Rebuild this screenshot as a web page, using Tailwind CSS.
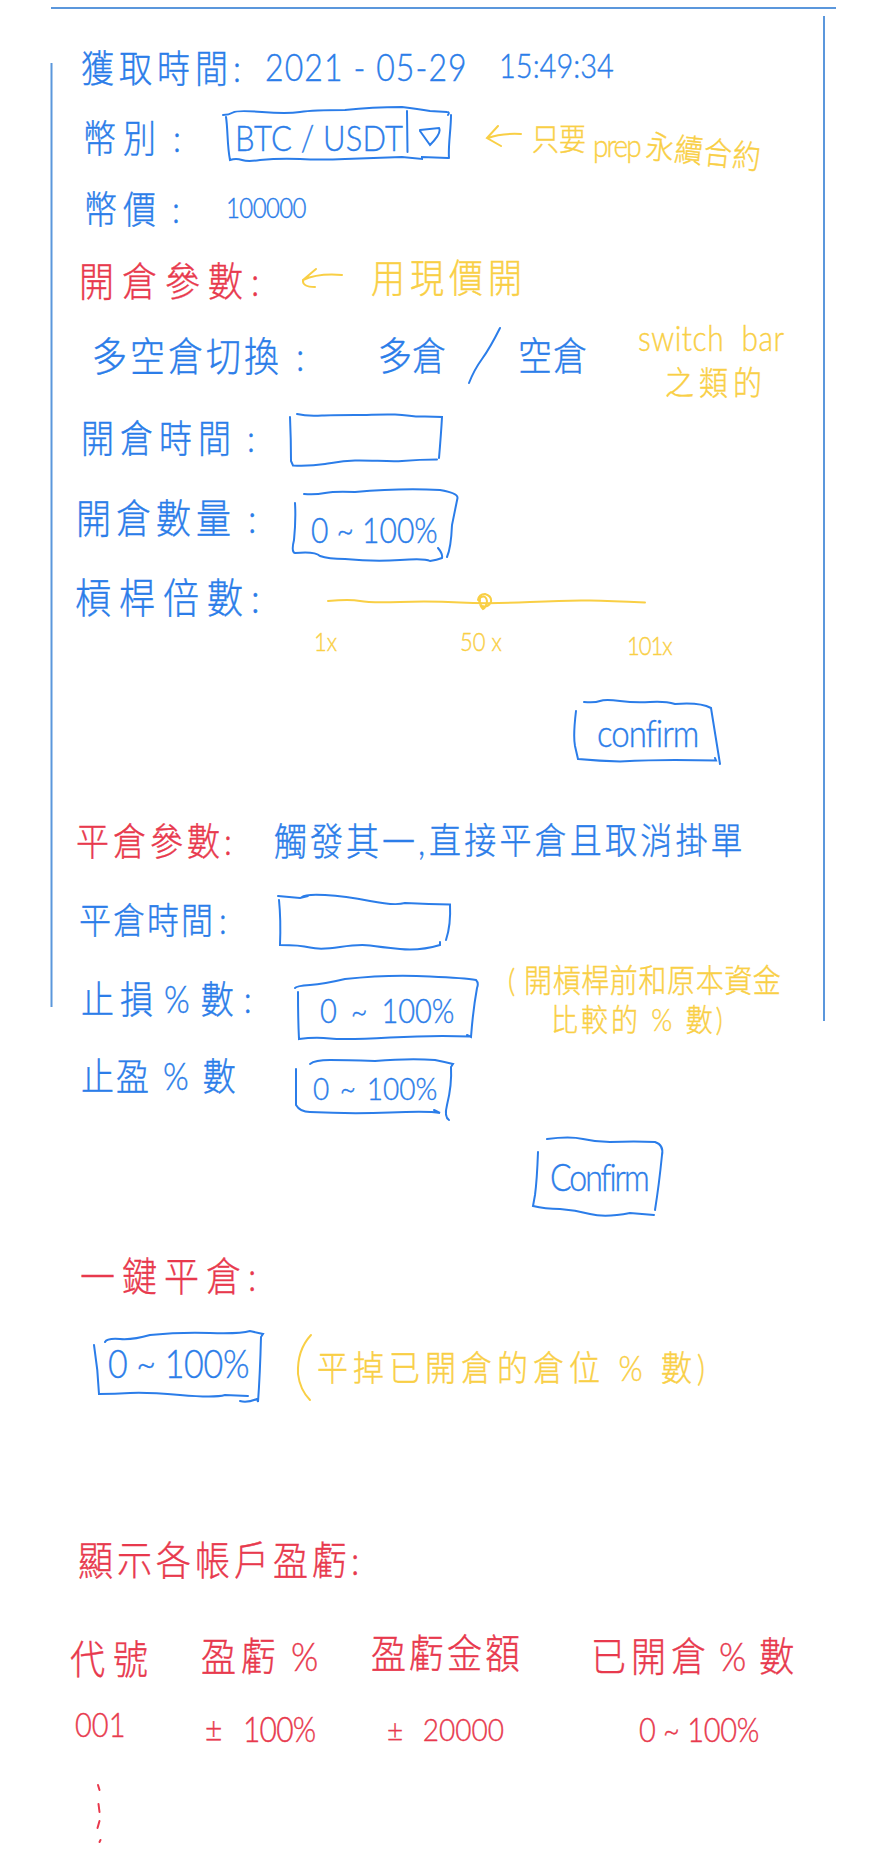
<!DOCTYPE html>
<html lang="zh-Hant">
<head>
<meta charset="utf-8">
<title>合約下單介面</title>
<script src="https://cdn.jsdelivr.net/npm/@tailwindcss/browser@4"></script>
</head>
<body class="bg-white">
<main class="relative w-[877px] h-[1868px] overflow-hidden pt-[31px] font-['Lato','Noto_Sans_CJK_TC',sans-serif] font-light text-[#2b7de9] text-[33px] leading-none whitespace-nowrap [-webkit-text-stroke:0.35px_currentColor] [&_div>span]:scale-y-[1.15] [&_svg]:fill-none [&_svg]:stroke-current [&_svg]:stroke-2 [&_svg]:overflow-visible [&_svg]:shrink-0 [&_span]:shrink-0">

  <!-- outer frame -->
  <svg class="absolute left-0 top-0 text-[#5b97dc]" width="877" height="1030" viewBox="0 0 877 1030"><path d="M51 8H836M51.500 63V1007M824 16V1021"/></svg>

  <section>
    <div class="flex items-center h-[72px] pl-[81px]">
      <span class="w-[184px] tracking-[5px]">獲取時間:</span>
      <span class="w-[234px] text-[32px] tracking-[1.1px]">2021 - 05-29</span>
      <span class="text-[29px] -mt-[6px]">15:49:34</span>
    </div>

    <div class="flex items-center h-[68px] pl-[83px]">
      <span class="w-[139px] tracking-[7px]">幣別<span class="ml-[10px]">:</span></span>
      <div class="grid items-center w-[264px] shrink-0">
        <svg class="[grid-area:1/1]" width="232" height="60" viewBox="222 107 232 60" stroke-linecap="round"><path d="M223 115Q229 115 233 112.500T262 112T300 112T345 110Q372 107 402 107Q418 109 430 111L447 112Q450 112 448 115M226 117C228 130 227 145 230 160Q236 158 242 160T260 160Q280 158 300 159T345 159T402 157L422 159V157L448 158M451 115C451 130 448 145 449 158M407 111L407.500 152M420 130L439 128Q442 133 430 145L420 131"/></svg>
        <span class="[grid-area:1/1] pl-[13px] text-[31px] tracking-[.2px]">BTC / USDT</span>
      </div>
      <svg class="text-[#f9cf45] mr-[10px]" width="36" height="22" viewBox="485 126 36 22" stroke-linecap="round"><path d="M497 126L486 138L500 146M487 138Q500 133 520 134"/></svg>
      <span class="w-[61px] text-[27px] text-[#f9cf45]">只要</span>
      <span class="w-[53px] mt-[14px] text-[28px] text-[#f9cf45] tracking-[-2px]">prep</span>
      <span class="mt-[28px] text-[28px] text-[#f9cf45] tracking-[1px] rotate-6">永續合約</span>
    </div>

    <div class="flex items-center h-[74px] pl-[84px]">
      <span class="w-[143px] tracking-[6px]">幣價<span class="ml-[10px]">:</span></span>
      <span class="text-[24px] -ml-px tracking-[-.6px]">100000</span>
    </div>

    <div class="flex items-center h-[70px] pl-[79px]">
      <span class="w-[222px] text-[35px] tracking-[8px] text-[#e8394d]">開倉參數:</span>
      <svg class="text-[#f9cf45] mr-[28px]" width="42" height="22" viewBox="301 269 42 22" stroke-linecap="round"><path d="M316 269L303 280Q302 287 315 287M303 280Q318 273 342 275"/></svg>
      <span class="-mt-[6px] text-[34px] tracking-[5px] text-[#f9cf45]">用現價開</span>
    </div>

    <div class="flex items-center h-[80px] pl-[92px]">
      <span class="w-[286px] text-[35px] tracking-[3px]">多空倉切換<span class="ml-[14px]">:</span></span>
      <span class="w-[88px] text-[34px]">多倉</span>
      <svg class="mr-[14px]" width="38" height="58" viewBox="468 328 38 58" stroke-linecap="round"><path d="M502 330Q492 350 484 361T471 385"/></svg>
      <span class="w-[120px] text-[34px] tracking-[1px]">空倉</span>
      <div class="flex flex-col gap-[15px] pt-[8px] text-[30px] text-[#f9cf45]">
        <span class="tracking-[.5px]">switch&nbsp; bar</span>
        <span class="pl-[27px] text-[29px] tracking-[5px]">之類的</span>
      </div>
    </div>

    <div class="flex items-center h-[84px] pl-[81px]">
      <span class="w-[208px] tracking-[6px]">開倉時間<span class="ml-[10px]">:</span></span>
      <svg width="154" height="60" viewBox="289 407 154 60" stroke-linecap="round"><path d="M297 414C305 416 314 416 322 415.500S340 415 355 415S380 414 395 414.500S412 417 425 416.500L442 417Q441 435 439 458M290 417Q291 440 291 461L293 465.500C305 466 315 465.500 325 464S340 461 355 460.500S390 462 402 461S425 459.500 437 459.500"/></svg>
    </div>

    <div class="flex items-center h-[76px] pl-[76px]">
      <span class="w-[216px] text-[35px] tracking-[5px]">開倉數量<span class="ml-[12px]">:</span></span>
      <div class="grid items-center shrink-0">
        <svg class="[grid-area:1/1]" width="166" height="60" viewBox="292 487 166 60" stroke-linecap="round"><path d="M304 494Q315 495 325 493T355 492Q400 488 440 490Q458 493 457.500 498Q454 515 452 525Q451 548 447 557M295 503Q296 520 294 540Q291 552 295 553Q315 551 320 556Q328 559 345 559Q375 562 400 560T430 561Q437 560 442 558Q443 554 438 548"/></svg>
        <span class="[grid-area:1/1] pl-[19px] mt-[24px] text-[30px]">0 ~ 100%</span>
      </div>
    </div>

    <div class="flex items-center h-[44px] mt-[20px] pl-[75px]">
      <span class="w-[250px] text-[36px] tracking-[8px]">槓桿倍數:</span>
      <svg class="text-[#f9cf45]" width="322" height="20" viewBox="325 587 322 20" stroke-linecap="round"><path d="M328 601Q350 599 360 601T400 602Q430 601 460 602.500T530 602Q570 600 590 600.500T645 602.500M478 600Q479 594 485 594Q492 596 491 602Q488 608 482 606Q477 602 481 597Q486 595 487 601Q486 608 483 609Q479 605 480 600"/></svg>
    </div>
    <div class="flex items-center h-[24px] mt-[11px] pl-[314px] text-[22px] text-[#f9cf45]">
      <span class="w-[146px]">1x</span>
      <span class="w-[167px]">50 x</span>
      <span class="pt-[6px] tracking-[-1px]">101x</span>
    </div>

    <div class="flex items-center h-[66px] mt-[45px] pl-[573px]">
      <div class="grid items-center shrink-0">
        <svg class="[grid-area:1/1]" width="148" height="66" viewBox="573 698 148 66" stroke-linecap="round"><path d="M584 701Q595 702 600 700T620 700T650 701T675 703Q700 701 711 707Q714 725 720 763M576 710Q573 735 575 745L578 758Q600 760 620 760.500Q650 759 675 759L716 759.500L715 757"/></svg>
        <span class="[grid-area:1/1] pl-[24px] text-[33px] tracking-[-1px]">confirm</span>
      </div>
    </div>
  </section>

  <section>
    <div class="flex items-center h-[50px] mt-[50px] pl-[76px]">
      <span class="w-[198px] text-[33px] tracking-[4px] text-[#e8394d]">平倉參數:</span>
      <span class="w-[155px] tracking-[3px]">觸發其一,</span>
      <span class="text-[32px] tracking-[3.2px]">直接平倉且取消掛單</span>
    </div>

    <div class="flex items-center h-[50px] mt-[30px] pl-[79px]">
      <span class="w-[199px] text-[32px] tracking-[2px]">平倉時間<span class="ml-[4px]">:</span></span>
      <svg width="173" height="60" viewBox="278 890 173 60" stroke-linecap="round"><path d="M278 896L300 898L308 896M302 897Q305 894 325 895T370 901T405 903Q430 904 450 904.500Q451 925 446 940M279 900Q281 920 280 945Q300 945 310 947.500T340 947T370 945.500T400 949T440 945V942"/></svg>
    </div>

    <div class="flex items-center h-[50px] mt-[28px] pl-[81px]">
      <span class="w-[214px] text-[33px] tracking-[2px]">止<span class="ml-[4px]">損</span><span class="mx-[9px]">%</span>數<span class="ml-[8px]">:</span></span>
      <div class="grid items-center w-[213px] shrink-0">
        <svg class="[grid-area:1/1]" width="184" height="60" viewBox="295 968 184 60" stroke-linecap="round"><path d="M295 988Q296 986 310 985T345 979Q390 974 430 976.500Q465 978 476 980Q479 983 477 988Q473 1010 471 1037L467 1035M298 992Q298 1020 299 1039Q315 1037 330 1038.500T390 1037.500T470 1036.500"/></svg>
        <span class="[grid-area:1/1] pl-[25px] pt-[21px] text-[29px] [word-spacing:6px]">0 ~ 100%</span>
      </div>
      <div class="flex flex-col gap-[12px] text-[28px] text-[#f9cf45]">
        <span class="tracking-[.6px]">( 開槓桿前和原本資金</span>
        <span class="pl-[43px] text-[27px] tracking-[3px]">比較的 % 數)</span>
      </div>
    </div>

    <div class="flex items-center h-[50px] mt-[27px] pl-[81px]">
      <span class="w-[213px] text-[33px] tracking-[2px]">止盈<span class="mx-[12px]">%</span>數</span>
      <div class="grid items-center shrink-0">
        <svg class="[grid-area:1/1]" width="160" height="60" viewBox="294 1045 160 60" stroke-linecap="round"><path d="M310 1064Q315 1060 330 1060T375 1061Q410 1058 435 1060Q445 1062 453 1064L451 1067Q452 1085 447 1105Q444 1117 449 1120M296 1069V1105Q300 1112 310 1112Q350 1114 390 1112.500T440 1113L434 1110"/></svg>
        <span class="[grid-area:1/1] pl-[19px] pt-[22px] text-[28px] [word-spacing:3px]">0 ~ 100%</span>
      </div>
    </div>

    <div class="flex items-center h-[80px] mt-[37px] pl-[532px]">
      <div class="grid items-center shrink-0">
        <svg class="[grid-area:1/1]" width="132" height="80" viewBox="532 1137 132 80" stroke-linecap="round"><path d="M547 1139Q570 1136 583 1139T610 1142Q635 1141 655 1142Q664 1145 662 1155Q659 1185 655 1210M538 1152Q537 1180 535 1195L533 1206Q545 1209 560 1209Q575 1210 590 1214T630 1213L654 1215"/></svg>
        <span class="[grid-area:1/1] pl-[18px] text-[32px] tracking-[-2px]">Confirm</span>
      </div>
    </div>
  </section>

  <section>
    <div class="flex items-center h-[50px] mt-[33px] pl-[80px]">
      <span class="text-[35px] tracking-[7px] text-[#e8394d]">一鍵平倉:</span>
    </div>

    <div class="flex items-center h-[74px] mt-[30px] pl-[92px]">
      <div class="grid items-center w-[204px] shrink-0">
        <svg class="[grid-area:1/1]" width="174" height="74" viewBox="92 1330 174 74" stroke-linecap="round"><path d="M105 1342Q107 1338 120 1339T150 1335Q180 1332 210 1333T250 1331L263 1334L261 1337Q260 1375 258 1402L257 1399Q247 1403 240 1401M94 1345Q98 1370 99 1394Q115 1394 130 1393T180 1395T225 1395L248 1396"/></svg>
        <span class="[grid-area:1/1] pl-[16px] -mt-[8px] text-[34px] tracking-[-.3px]">0 ~ 100%</span>
      </div>
      <svg class="text-[#f9cf45] mr-[5px]" width="16" height="66" viewBox="296 1334 16 66" stroke-linecap="round"><path d="M311 1335Q297 1350 298 1374Q300 1390 310 1400"/></svg>
      <span class="text-[31px] tracking-[5px] text-[#f9cf45]">平掉已開倉的倉位 % 數)</span>
    </div>
  </section>

  <section class="text-[#e8394d]">
    <div class="flex items-center h-[50px] mt-[130px] pl-[78px]">
      <span class="text-[35px] tracking-[4px]">顯示各帳戶盈虧:</span>
    </div>
    <div class="flex items-center h-[50px] mt-[46px] pl-[70px]">
      <span class="w-[131px] mt-[6px] text-[35px] tracking-[8px]">代號</span>
      <span class="w-[170px] text-[35px] tracking-[5px]">盈虧<span class="ml-[10px]">%</span></span>
      <span class="w-[220px] -mt-[6px] text-[35px] tracking-[3px]">盈虧金額</span>
      <span class="text-[35px] tracking-[5px]">已開倉<span class="mx-[8px]">%</span>數</span>
    </div>
    <div class="flex items-center h-[50px] mt-[23px] pl-[75px] text-[30px]">
      <span class="w-[130px] -mt-[10px] text-[29px]">001</span>
      <span class="w-[182px] tracking-[-.8px] [word-spacing:14px]">± 100%</span>
      <span class="w-[252px] text-[28px] [word-spacing:12px]">± 20000</span>
      <span class="text-[29px] tracking-[-.3px]">0 ~ 100%</span>
    </div>
    <svg class="block mt-[30px] ml-[94px]" width="10" height="62" viewBox="94 1783 10 62" stroke-linecap="round"><path d="M98 1785L99.500 1790M98.500 1804L99.500 1812M99.500 1821L97.500 1828M100.500 1840L99.500 1842"/></svg>
  </section>
</main>
</body>
</html>
